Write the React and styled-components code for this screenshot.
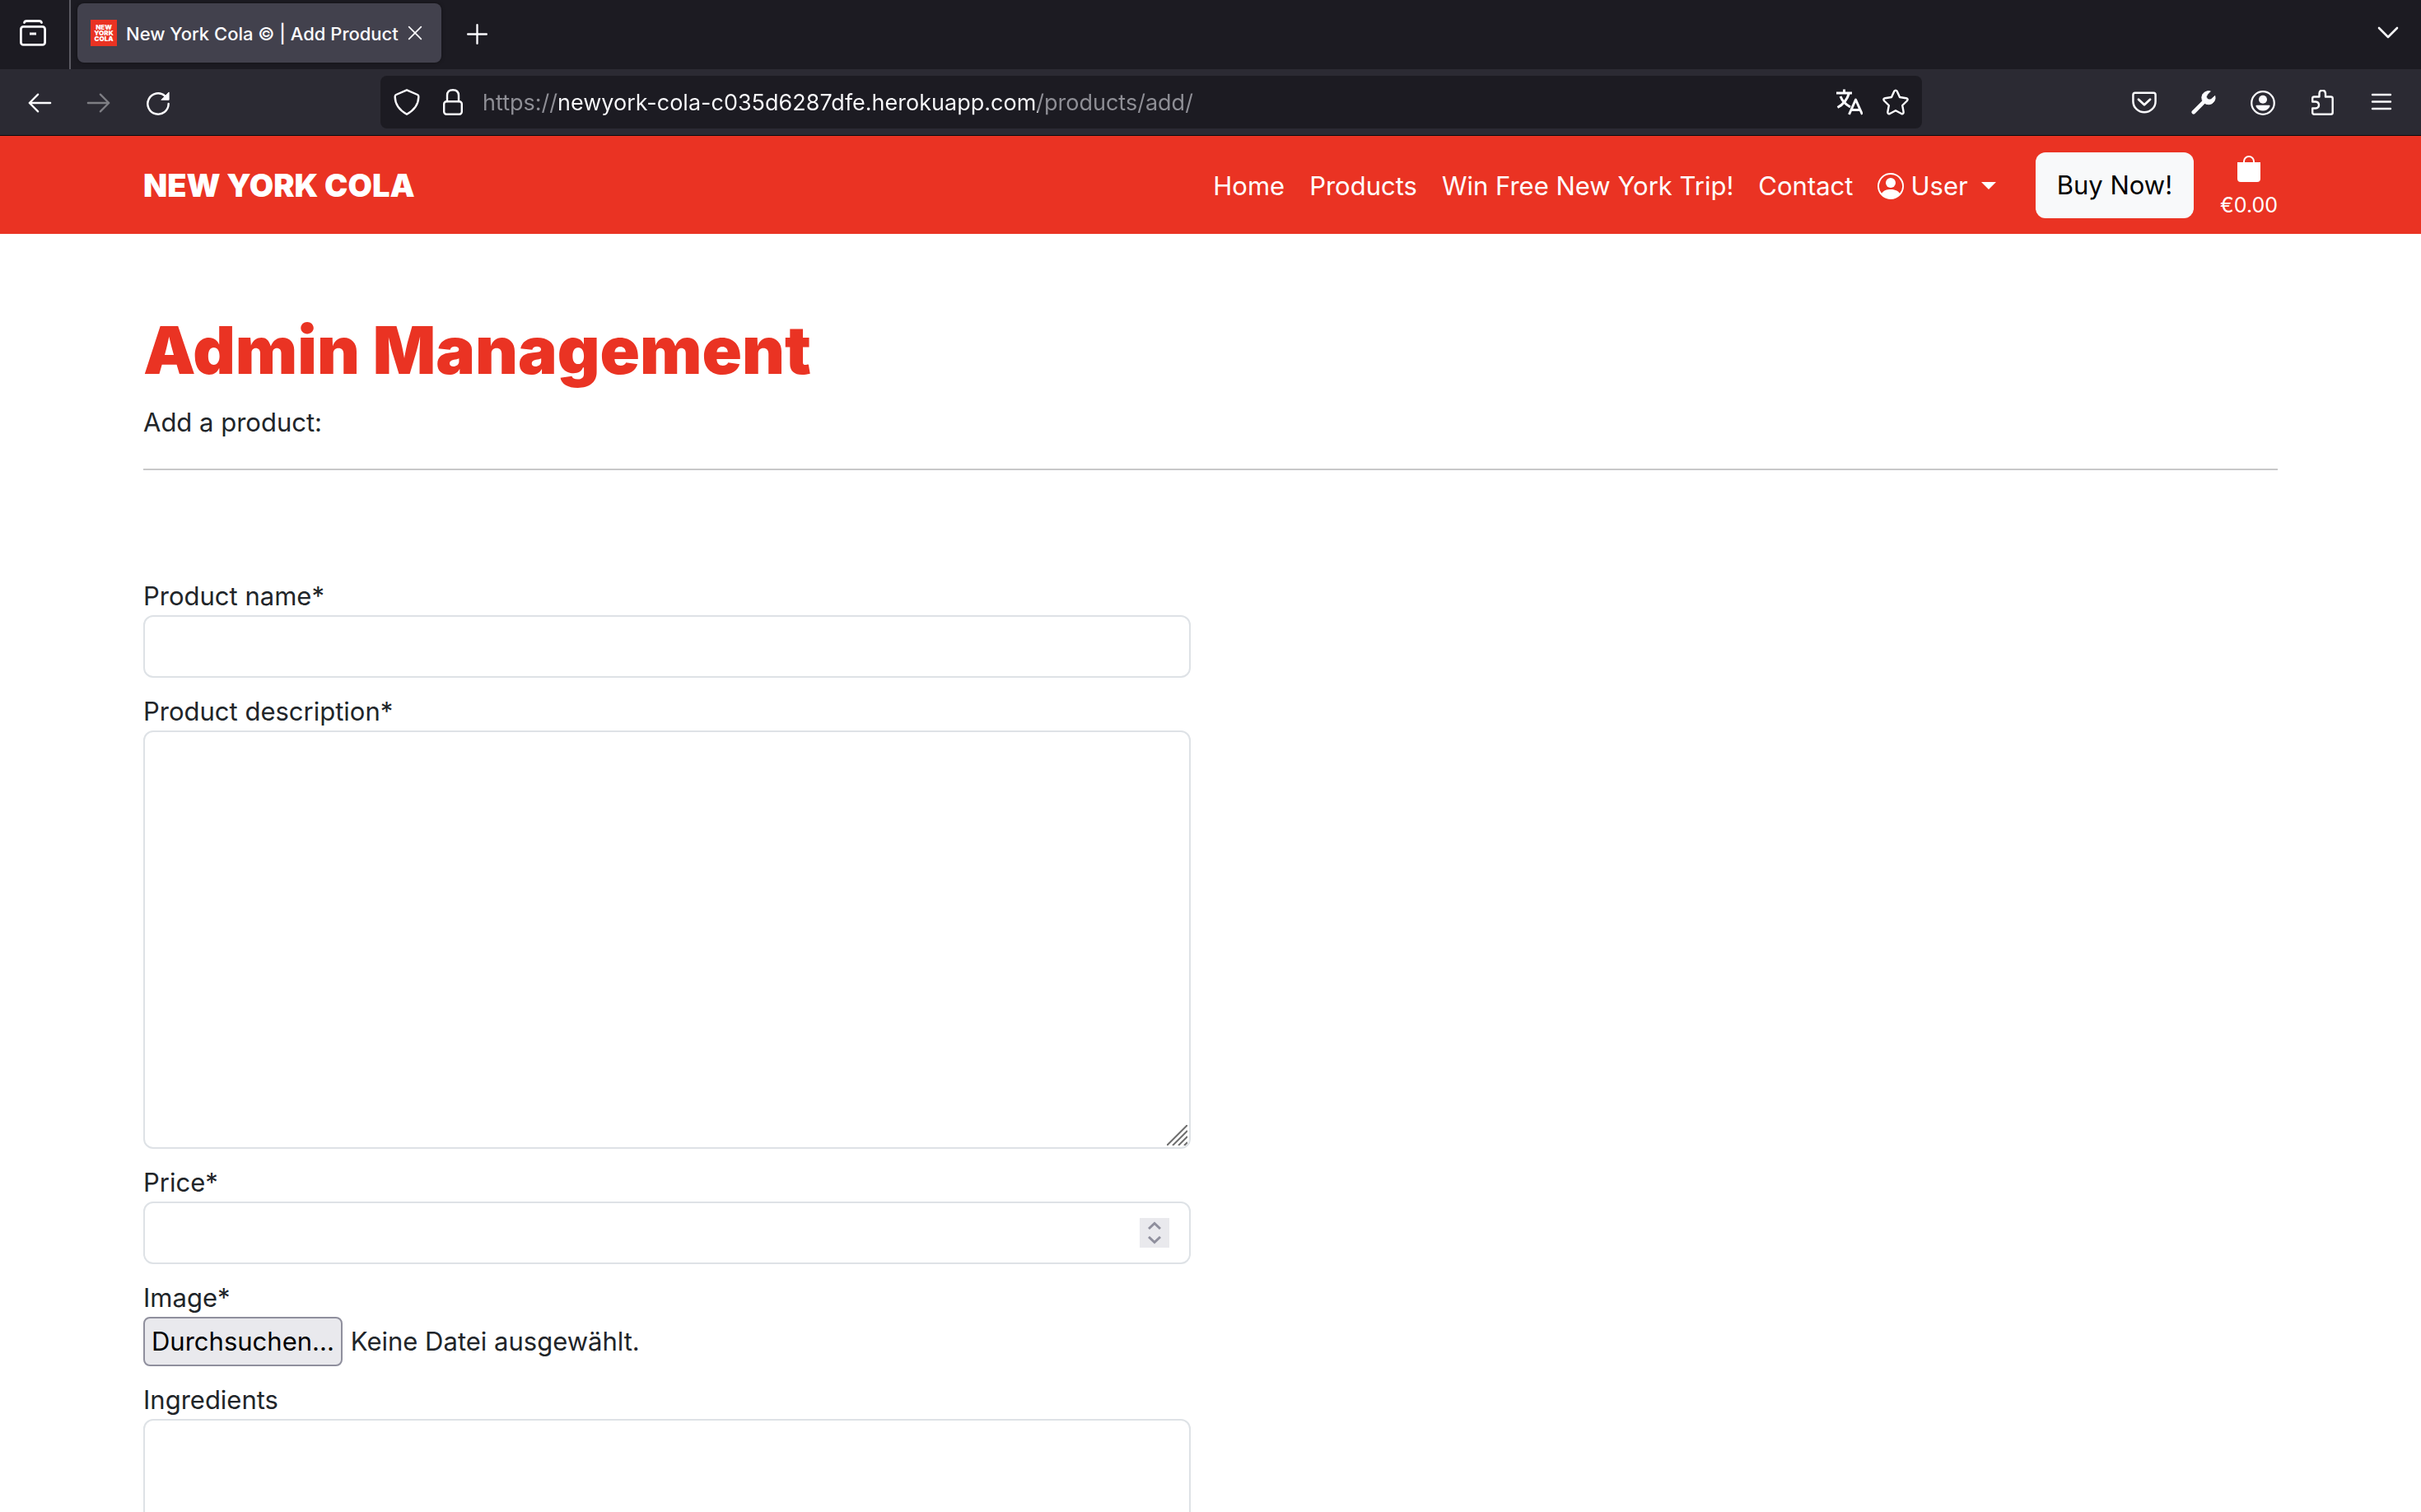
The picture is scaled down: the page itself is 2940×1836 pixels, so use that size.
import React, { useRef } from "react";
import styled, { createGlobalStyle, css } from "styled-components";
import { BsPersonCircle, BsBagFill } from "react-icons/bs";

const sans = '"Inter", "Liberation Sans", sans-serif';

const GlobalStyle = createGlobalStyle`
  *, *::before, *::after { box-sizing: border-box; }
  html, body { margin: 0; height: 100%; }
  #root { height: 100%; }
  body { overflow: hidden; background: #fff; color: #212529; font: 400 31px/48px ${sans}; }
  button, input, textarea { font: inherit; color: inherit; }
`;

const Window = styled.div`
  display: flex;
  flex-direction: column;
  height: 100vh;
`;

const iconButton = css`
  display: flex;
  align-items: center;
  justify-content: center;
  padding: 0;
  border: 0;
  background: none;
  color: #fbfbfe;
`;

const TabBar = styled.div`
  display: flex;
  align-items: flex-start;
  flex: none;
  height: 84px;
  background: #1c1b22;
`;

const FirefoxView = styled.button`
  ${iconButton}
  width: 86px;
  height: 84px;
  padding: 0 4px 4px 0;
  border-right: 2px solid #5b5a62;
`;

const Tab = styled.div`
  display: flex;
  align-items: center;
  width: 442px;
  height: 72px;
  margin: 4px 8px 8px;
  padding: 0 16px;
  border-radius: 8px;
  background: #42414d;
  box-shadow: 0 0 4px rgba(0, 0, 0, 0.4);
`;

const Favicon = styled.div`
  display: flex;
  flex-direction: column;
  justify-content: center;
  width: 32px;
  height: 32px;
  background: #ea3323;
  color: #fff;
  font-size: 8px;
  font-weight: 900;
  line-height: 7px;
  text-align: center;
`;

const TabTitle = styled.span`
  flex: 1;
  padding: 2px 0 0 11px;
  color: #fbfbfe;
  font-size: 22px;
  font-weight: 500;
  line-height: 32px;
  white-space: nowrap;
`;

const TabButton = styled.button`
  ${iconButton}
  width: ${(p) => p.$width}px;
  height: ${(p) => p.$height || 80}px;
`;

const Spacer = styled.div`
  flex: 1;
`;

const Toolbar = styled.div`
  display: grid;
  grid-template-columns: 462px 1fr 606px;
  align-items: center;
  flex: none;
  height: 81px;
  border-bottom: 1px solid #0c0c0d;
  background: #2b2a33;
`;

const ToolGroup = styled.div`
  display: flex;
  align-items: center;
  justify-content: ${(p) => (p.$end ? "flex-end" : "flex-start")};
  gap: 8px;
  padding: 0 16px;
`;

const ToolButton = styled.button`
  ${iconButton}
  width: 64px;
  height: 64px;
  padding-top: 2px;
  opacity: ${(p) => (p.disabled ? 0.4 : 1)};
`;

const AddressBar = styled.div`
  display: flex;
  align-items: center;
  height: 64px;
  padding: 0 4px 0 8px;
  border-radius: 8px;
  background: #1c1b22;
`;

const AddressButton = styled.button`
  ${iconButton}
  width: ${(p) => p.$width}px;
  height: 56px;
`;

const Address = styled.input`
  flex: 1;
  min-width: 0;
  margin-left: 4px;
  padding: 2px 0 0;
  border: 0;
  outline: 0;
  background: linear-gradient(90deg, #8f8f96 0 90px, #fbfbfe 90px 674px, #8f8f96 674px);
  -webkit-background-clip: text;
  background-clip: text;
  color: transparent;
  caret-color: #fbfbfe;
  font-size: 27px;
  line-height: 40px;
`;

const Container = styled.div`
  width: 100%;
  max-width: 2640px;
  margin: 0 auto;
  padding: 0 24px;
`;

const SiteHeader = styled.header`
  flex: none;
  background: #ea3323;
  color: #fff;
`;

const HeaderRow = styled(Container)`
  display: flex;
  align-items: center;
  justify-content: space-between;
  height: 119px;
`;

const Brand = styled.a`
  color: #fff;
  font-size: 38px;
  font-weight: 900;
  text-decoration: none;
  white-space: nowrap;
`;

const SiteNav = styled.nav`
  display: flex;
  align-items: center;
  gap: 32px;
`;

const NavLinks = styled.div`
  display: flex;
  gap: 30px;
  padding-top: 2px;
`;

const NavLink = styled.a`
  display: flex;
  align-items: center;
  gap: 8px;
  color: #fff;
  text-decoration: none;
  white-space: nowrap;
`;

const Caret = styled.span`
  margin-left: 8px;
  border: 9px solid transparent;
  border-top-color: #fff;
  border-bottom: 0;
`;

const BuyButton = styled.button`
  height: 80px;
  margin-left: 16px;
  padding: 0 26px;
  border: 0;
  border-radius: 12px;
  background: #f8f9fa;
  color: #000;
  white-space: nowrap;
`;

const Bag = styled.a`
  display: flex;
  flex-direction: column;
  align-items: center;
  gap: 16px;
  color: #fff;
  font-size: 25px;
  line-height: 24px;
  text-decoration: none;
`;

const Main = styled.main`
  flex: 1;
  min-height: 0;
  overflow: hidden;
`;

const Title = styled.h1`
  margin: 93px 0 16px;
  color: #ea3323;
  font-size: 80px;
  font-weight: 900;
  line-height: 96px;
`;

const Lead = styled.p`
  margin: 0 0 32px;
`;

const Rule = styled.hr`
  height: 2px;
  margin: 0 0 128px;
  border: 0;
  background: #c8c8c9;
`;

const Form = styled.form`
  display: flex;
  flex-direction: column;
  gap: 16px;
  width: calc(50% - 24px);
`;

const Field = styled.div`
  display: flex;
  flex-direction: column;
`;

const Label = styled.label`
  padding-top: 2px;
  line-height: 46px;
`;

const Control = styled.div`
  display: flex;
  position: relative;
`;

const box = css`
  width: 100%;
  margin: 0;
  padding: 12px 24px;
  border: 2px solid #dee2e6;
  border-radius: 12px;
  outline: 0;
  background: #fff;
`;

const TextInput = styled.input`
  ${box}
  height: 76px;
  appearance: textfield;
  &::-webkit-inner-spin-button { appearance: none; }
`;

const TextArea = styled.textarea`
  ${box}
  display: block;
  height: 508px;
  resize: none;
`;

const Grip = styled.svg`
  position: absolute;
  right: 4px;
  bottom: 4px;
`;

const Spinner = styled.div`
  position: absolute;
  top: 20px;
  right: 26px;
  display: flex;
  flex-direction: column;
  width: 36px;
  height: 36px;
  background: #e9e9ed;
`;

const Step = styled.button`
  ${iconButton}
  flex: 1;
  color: #8f8f9d;
`;

const FileRow = styled.div`
  display: flex;
  align-items: center;
  gap: 10px;
  height: 60px;
`;

const FileButton = styled.button`
  height: 60px;
  padding: 0 8px;
  border: 2px solid #8f8f9d;
  border-radius: 8px;
  background: #e9e9ed;
  color: #000;
`;

const HiddenFile = styled.input`
  display: none;
`;

function Icon({ size = 32, children }) {
  return (
    <svg width={size} height={size} viewBox="0 0 32 32" fill="none" stroke="currentColor" strokeWidth="2" strokeLinecap="round" strokeLinejoin="round" aria-hidden="true">
      {children}
    </svg>
  );
}

const icons = {
  view: (
    <>
      <path d="M5.500 3.500Q6 1.500 8.500 1.500H23.500Q26 1.500 26.500 3.500" strokeWidth="2.800" />
      <rect x="1.400" y="8.400" width="29.200" height="22" rx="3" strokeWidth="2.800" />
      <path d="M12 17H20" strokeWidth="3" strokeLinecap="butt" />
    </>
  ),
  back: <path d="M30 16H3M14 5L3 16L14 27" strokeWidth="2.500" />,
  forward: <path d="M2 16H29M18 5L29 16L18 27" strokeWidth="2.500" />,
  reload: (
    <>
      <path d="M25 7A13.500 13.500 0 1 0 29.500 17" strokeWidth="2.600" />
      <path d="M30 2.500V12H20.500Z" fill="currentColor" strokeWidth="1" />
    </>
  ),
  shield: <path d="M16 1.300L29 7Q30.500 7.700 30.300 10Q30 23 16 30.700Q2 23 1.700 10Q1.500 7.700 3 7Z" strokeWidth="2.400" />,
  lock: (
    <>
      <rect x="5.200" y="15.200" width="21.600" height="15.600" rx="3" strokeWidth="2.400" />
      <path d="M9 15V8Q9 1.200 16 1.200T23 8V15" strokeWidth="2.400" />
    </>
  ),
  translate: (
    <path d="M0 5H19M9.500 0.500V5M15.500 5Q12 17 1.500 22.500M5 9Q8 17 17 22M15.500 31L23.500 13L31.500 31M18.500 25.500H28.500" strokeWidth="3" strokeLinecap="butt" />
  ),
  star: (
    <path d="M14.300 2.800Q16 0.500 17.700 2.800L21 10L28.800 11.200Q31.800 12 29.800 14.500L24.200 20L25.600 27.800Q25.800 31 23 30L16 26.300L9 30Q6.200 31 6.400 27.800L7.800 20L2.200 14.500Q0.200 12 3.200 11.200L11 10Z" strokeWidth="2.400" />
  ),
  pocket: (
    <>
      <path d="M4 3H28Q30.500 3 30.500 5.500V14A14.500 14 0 0 1 1.500 14V5.500Q1.500 3 4 3Z" strokeWidth="2.600" />
      <path d="M8.500 11.500L16 18.500L23.500 11.500" strokeWidth="3" />
    </>
  ),
  wrench: (
    <>
      <path d="M3 28L18 13" strokeWidth="5" />
      <path d="M24.500 0.800A8.700 8.700 0 1 0 30.700 6.800L25.500 11.500Q22.500 12.500 20.500 10.500Q18.500 8 20.500 5.500Z" fill="currentColor" strokeWidth="1" />
    </>
  ),
  account: (
    <>
      <circle cx="16" cy="16" r="14.700" strokeWidth="2.400" />
      <circle cx="16" cy="11.500" r="5.400" fill="currentColor" stroke="none" />
      <path d="M7.500 19H24.500Q26 19.500 24.500 21.500Q21.500 26 16 26T7.500 21.500Q6 19.500 7.500 19Z" fill="currentColor" stroke="none" />
    </>
  ),
  puzzle: (
    <path d="M4.200 14.500V10.500Q4.200 8.500 6.200 8.500H12.500V5Q12.500 0.700 16.200 0.700T20 5V8.500H26.500Q28.700 8.500 28.700 10.500V27.700Q28.700 29.700 26.500 29.700H6.200Q4.200 29.700 4.200 27.700V22.500H8Q12 22 12 18.500T8 14.500Z" strokeWidth="2.400" />
  ),
  menu: <path d="M5 6H27M5 14.500H27M5 23H27" strokeWidth="2.400" />,
  close: <path d="M3 3L29 29M29 3L3 29" strokeWidth="3" />,
  plus: <path d="M16 1.500V30.500M1.500 16H30.500" strokeWidth="3" />,
  chevron: <path d="M5 10L16 21L27 10" strokeWidth="2.600" />,
};

const Chevron = ({ up }) => (
  <svg width="16" height="10" viewBox="0 0 16 10" fill="none" stroke="currentColor" strokeWidth="3" aria-hidden="true">
    <path d={up ? "M1 9L8 2.500L15 9" : "M1 1L8 7.500L15 1"} />
  </svg>
);

const ResizeGrip = () => (
  <Grip width="25" height="25" viewBox="0 0 25 25" stroke="#6f6f6f" strokeWidth="2" aria-hidden="true">
    <path d="M0 25L25 0M7 25L25 7M14 25L25 14M21 25L25 21" />
  </Grip>
);

const links = ["Home", "Products", "Win Free New York Trip!", "Contact"];

export default function App() {
  const file = useRef(null);
  return (
    <Window>
      <GlobalStyle />
      <TabBar>
        <FirefoxView aria-label="Firefox View"><Icon>{icons.view}</Icon></FirefoxView>
        <Tab>
          <Favicon><span>NEW</span><span>YORK</span><span>COLA</span></Favicon>
          <TabTitle>New York Cola © | Add Product</TabTitle>
          <TabButton $width={32} $height={32} aria-label="Close tab"><Icon size={18}>{icons.close}</Icon></TabButton>
        </Tab>
        <TabButton $width={70} $height={82} aria-label="New tab"><Icon size={25}>{icons.plus}</Icon></TabButton>
        <Spacer />
        <TabButton $width={80} aria-label="List all tabs"><Icon>{icons.chevron}</Icon></TabButton>
      </TabBar>
      <Toolbar>
        <ToolGroup>
          <ToolButton aria-label="Back"><Icon size={30}>{icons.back}</Icon></ToolButton>
          <ToolButton aria-label="Forward" disabled><Icon size={30}>{icons.forward}</Icon></ToolButton>
          <ToolButton aria-label="Reload"><Icon size={30}>{icons.reload}</Icon></ToolButton>
        </ToolGroup>
        <AddressBar>
          <AddressButton $width={48} aria-label="Tracking protection"><Icon>{icons.shield}</Icon></AddressButton>
          <AddressButton $width={64} aria-label="Site information"><Icon>{icons.lock}</Icon></AddressButton>
          <Address aria-label="Address" defaultValue="https://newyork-cola-c035d6287dfe.herokuapp.com/products/add/" />
          <AddressButton $width={56} aria-label="Translate page"><Icon>{icons.translate}</Icon></AddressButton>
          <AddressButton $width={56} aria-label="Bookmark page"><Icon>{icons.star}</Icon></AddressButton>
        </AddressBar>
        <ToolGroup $end>
          <ToolButton aria-label="Pocket"><Icon size={30}>{icons.pocket}</Icon></ToolButton>
          <ToolButton aria-label="Developer tools"><Icon size={30}>{icons.wrench}</Icon></ToolButton>
          <ToolButton aria-label="Account"><Icon size={30}>{icons.account}</Icon></ToolButton>
          <ToolButton aria-label="Extensions"><Icon>{icons.puzzle}</Icon></ToolButton>
          <ToolButton aria-label="Menu"><Icon>{icons.menu}</Icon></ToolButton>
        </ToolGroup>
      </Toolbar>
      <SiteHeader>
        <HeaderRow>
          <Brand href="#">NEW YORK COLA</Brand>
          <SiteNav>
            <NavLinks>
              {links.map((text) => <NavLink key={text} href="#">{text}</NavLink>)}
              <NavLink href="#"><BsPersonCircle size={32} />User<Caret /></NavLink>
            </NavLinks>
            <BuyButton>Buy Now!</BuyButton>
            <Bag href="#"><BsBagFill size={32} />€0.00</Bag>
          </SiteNav>
        </HeaderRow>
      </SiteHeader>
      <Main>
        <Container>
          <Title>Admin Management</Title>
          <Lead>Add a product:</Lead>
          <Rule />
          <Form>
            <Field>
              <Label htmlFor="name">Product name*</Label>
              <TextInput id="name" />
            </Field>
            <Field>
              <Label htmlFor="description">Product description*</Label>
              <Control>
                <TextArea id="description" />
                <ResizeGrip />
              </Control>
            </Field>
            <Field>
              <Label htmlFor="price">Price*</Label>
              <Control>
                <TextInput id="price" type="number" />
                <Spinner>
                  <Step type="button" aria-label="Increase"><Chevron up /></Step>
                  <Step type="button" aria-label="Decrease"><Chevron /></Step>
                </Spinner>
              </Control>
            </Field>
            <Field>
              <Label htmlFor="image">Image*</Label>
              <FileRow>
                <HiddenFile ref={file} id="image" type="file" />
                <FileButton type="button" onClick={() => file.current.click()}>Durchsuchen...</FileButton>
                <span>Keine Datei ausgewählt.</span>
              </FileRow>
            </Field>
            <Field>
              <Label htmlFor="ingredients">Ingredients</Label>
              <TextArea id="ingredients" />
            </Field>
          </Form>
        </Container>
      </Main>
    </Window>
  );
}
